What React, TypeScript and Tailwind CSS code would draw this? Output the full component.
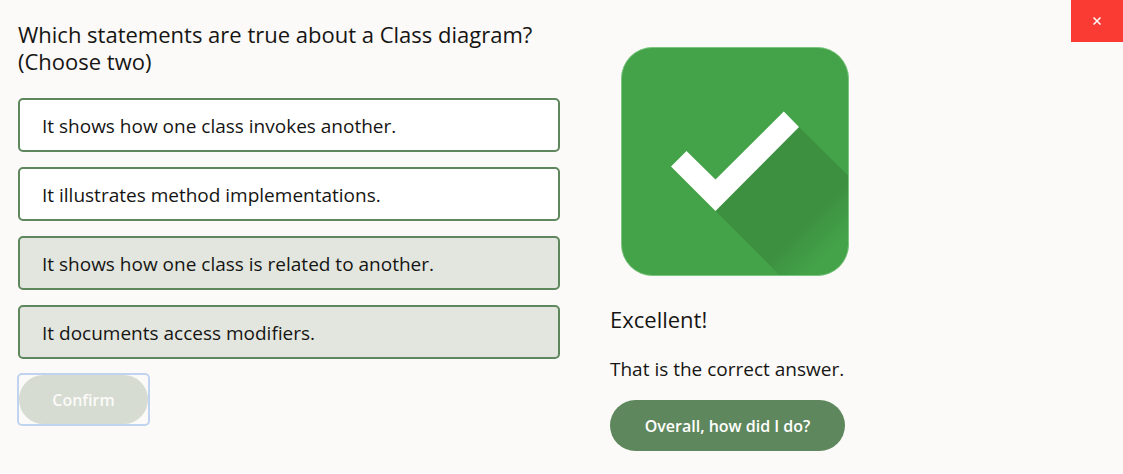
import { useState } from "react";

const options = [
  "It shows how one class invokes another.",
  "It illustrates method implementations.",
  "It shows how one class is related to another.",
  "It documents access modifiers.",
];

function SuccessIcon() {
  return (
    <svg viewBox="0 0 228 229" className="ml-[11px] h-[229px] w-[228px]" role="img" aria-label="Correct">
      <defs>
        <linearGradient id="shade" gradientUnits="userSpaceOnUse" x1="124" y1="107" x2="215" y2="198">
          <stop offset="0" stopColor="#3c9040" />
          <stop offset="0.72" stopColor="#3c9040" />
          <stop offset="1" stopColor="#44a349" />
        </linearGradient>
        <clipPath id="tile">
          <rect x="0.5" y="0.5" width="227" height="228" rx="31" />
        </clipPath>
      </defs>
      <rect x="0.5" y="0.5" width="227" height="228" rx="31" fill="#44a349" />
      <path clipPath="url(#tile)" d="M94 163.500 178 80 228 129.500V229H159.500Z" fill="url(#shade)" />
      <rect x="0.5" y="0.5" width="227" height="228" rx="31" fill="none" stroke="#7cc47f" strokeWidth="1" />
      <path d="M65.500 104 50 119.500 94.500 164 178 80 162.800 64.500 94.500 132.500Z" fill="#fff" />
    </svg>
  );
}

export default function App() {
  const [selected, setSelected] = useState<number[]>([2, 3]);
  const toggle = (i: number) =>
    setSelected((s) => (s.includes(i) ? s.filter((n) => n !== i) : [...s, i]));

  return (
    <main className="relative min-h-screen bg-[#fbfaf8] font-['Open_Sans','Noto_Sans',sans-serif] text-[#161513]">
      <button
        type="button"
        aria-label="Close"
        className="absolute top-0 right-0 flex h-[42px] w-[52px] items-center justify-center bg-[#f93b33] text-white"
      >
        <svg viewBox="0 0 8 8" className="size-2" aria-hidden="true">
          <path d="M0.500 0.500 7.500 7.500M7.500 0.500 0.500 7.500" stroke="currentColor" strokeWidth="1.500" />
        </svg>
      </button>
      <div className="grid grid-cols-[minmax(0,542fr)_minmax(0,495fr)] gap-[50px] pr-[18px] pl-[18px]">
        <section className="pt-[21px]">
          <h1 className="text-[22px] leading-[27px]">
            <span className="block">Which statements are true about a Class diagram?</span>
            <span className="block">(Choose two)</span>
          </h1>
          <div className="mt-[23px] flex flex-col gap-[15px]">
            {options.map((text, i) => (
              <button
                key={text}
                type="button"
                aria-pressed={selected.includes(i)}
                onClick={() => toggle(i)}
                className={`h-[54px] rounded-[5px] border-2 border-[#5f875d] px-[22px] pt-[2px] text-left text-[19px] leading-6 ${
                  selected.includes(i) ? "bg-[#e2e6df]" : "bg-white"
                }`}
              >
                {text}
              </button>
            ))}
          </div>
          <button
            type="button"
            disabled
            className="mt-4 ml-px block h-[49px] w-[129px] rounded-[3px] outline-2 outline-[#c0d4ef]"
          >
            <span className="flex h-full items-center justify-center rounded-full bg-[#d6dcd2] text-[16px] font-semibold text-[#fbfaf8]">
              Confirm
            </span>
          </button>
        </section>
        <section className="flex flex-col items-start pt-[47px]">
          <SuccessIcon />
          <h2 className="mt-[30px] text-[22px] leading-[27px]">Excellent!</h2>
          <p className="mt-[24px] text-[19px] leading-6">That is the correct answer.</p>
          <button
            type="button"
            className="mt-[19px] h-[51px] w-[235px] rounded-full bg-[#5f875d] text-[16px] font-semibold text-white"
          >
            Overall, how did I do?
          </button>
        </section>
      </div>
    </main>
  );
}
